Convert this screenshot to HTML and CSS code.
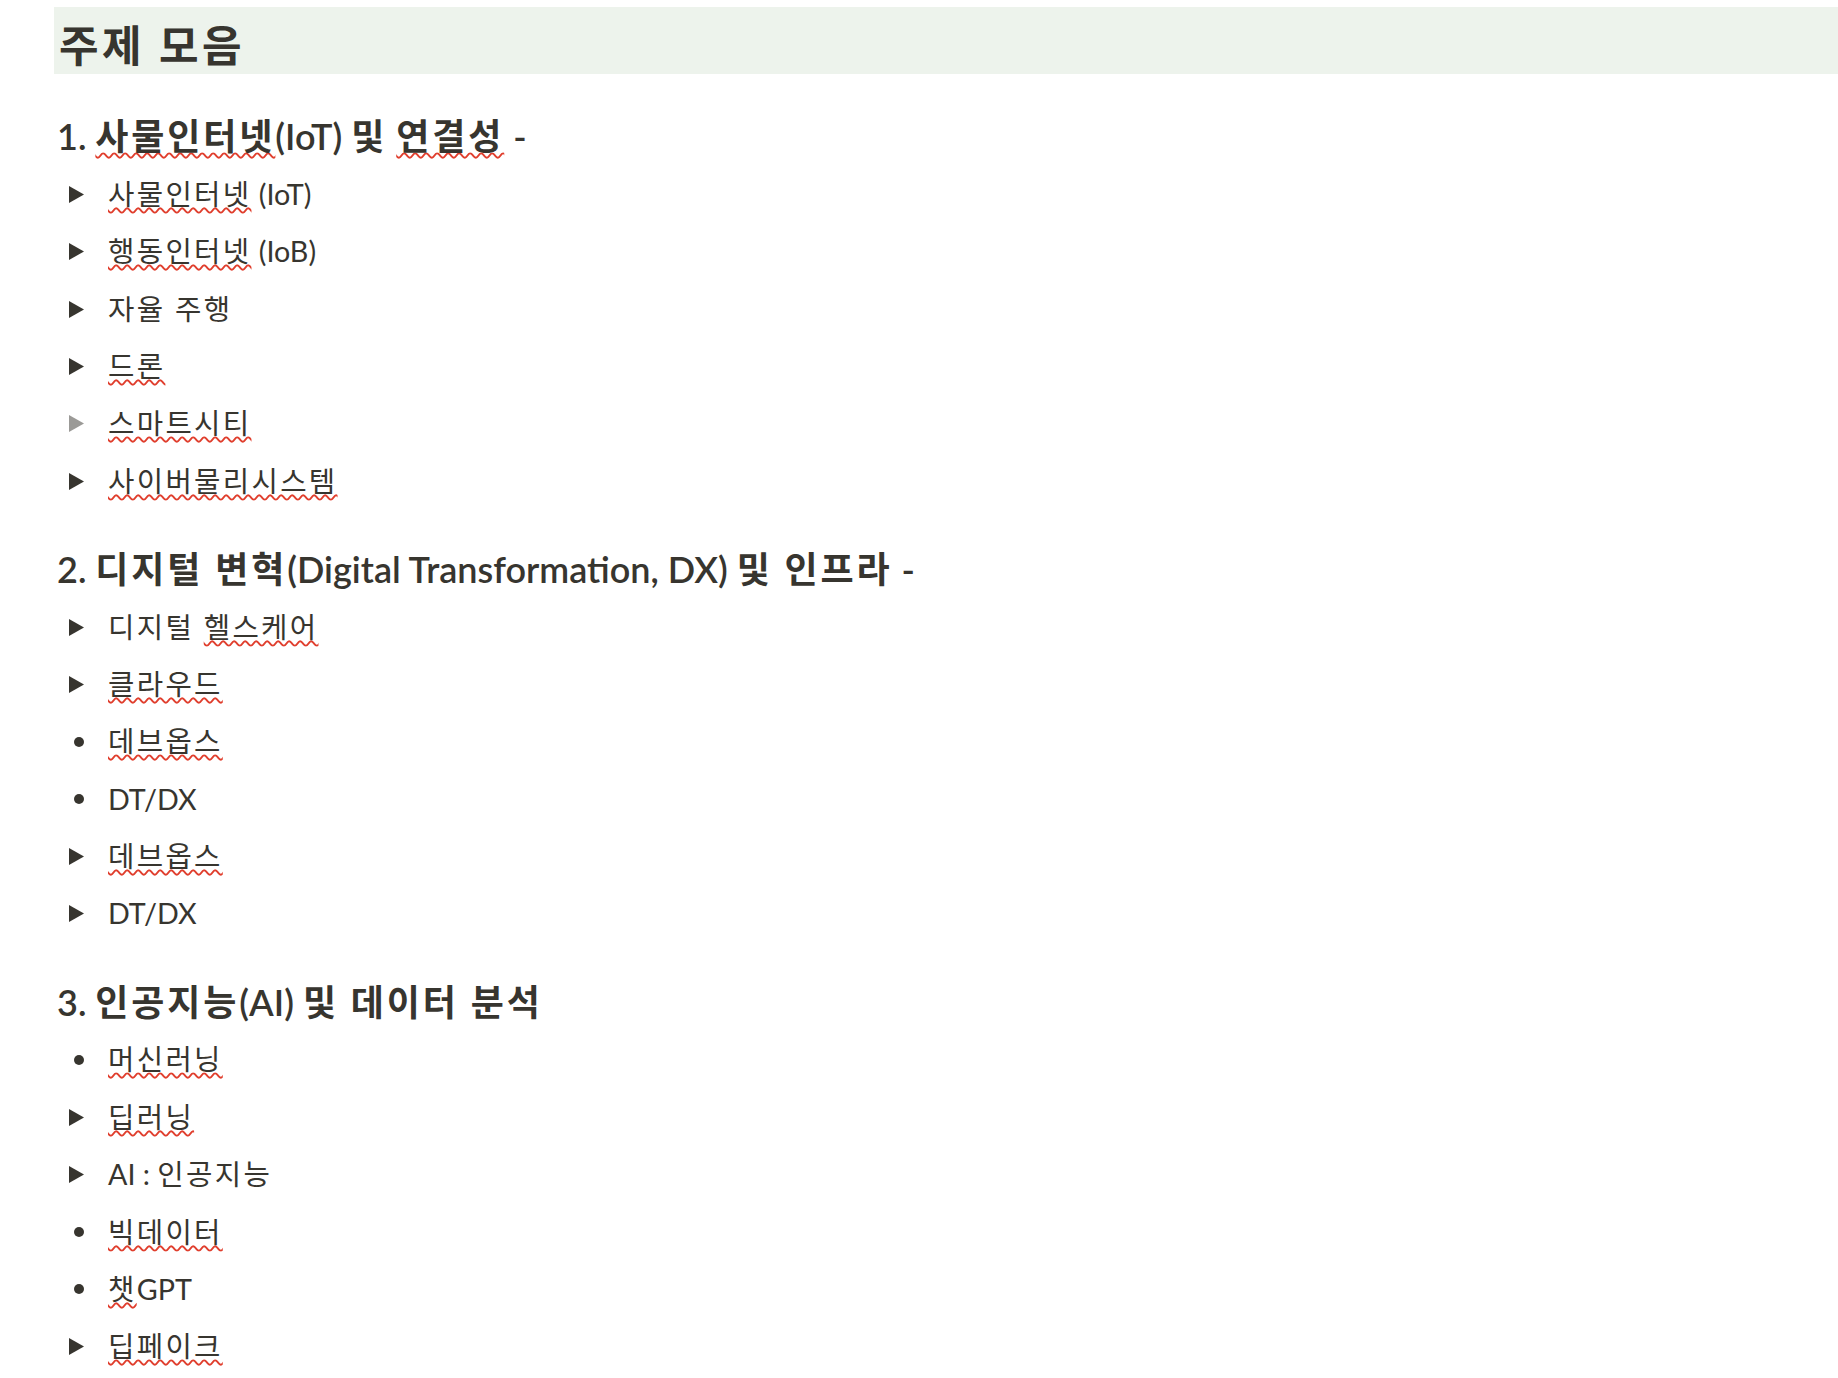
FILE: index.html
```html
<!DOCTYPE html>
<html lang="ko">
<head>
  <meta charset="UTF-8" />
  <meta name="viewport" content="width=device-width, initial-scale=1.0" />
  <title>주제 모음</title>
  <link rel="stylesheet" href="styles.css">
</head>
<body>
  <div class="page">
    <h2 class="title"><span class="k">주제 모음</span></h2>

    <div class="section">
      <h3>1. <span class="typo">사물인터넷</span>(IoT) <span class="k">및</span> <span class="typo">연결성</span> -</h3>
      <div class="item"><span class="marker"><svg class="tri" viewBox="0 0 15 17"><polygon points="0,0 15,8.5 0,17"/></svg></span><span class="txt"><span class="typo">사물인터넷</span> (IoT)</span></div>
      <div class="item"><span class="marker"><svg class="tri" viewBox="0 0 15 17"><polygon points="0,0 15,8.5 0,17"/></svg></span><span class="txt"><span class="typo">행동인터넷</span> (IoB)</span></div>
      <div class="item"><span class="marker"><svg class="tri" viewBox="0 0 15 17"><polygon points="0,0 15,8.5 0,17"/></svg></span><span class="txt"><span class="k">자율 주행</span></span></div>
      <div class="item"><span class="marker"><svg class="tri" viewBox="0 0 15 17"><polygon points="0,0 15,8.5 0,17"/></svg></span><span class="txt"><span class="typo">드론</span></span></div>
      <div class="item"><span class="marker"><svg class="tri empty" viewBox="0 0 15 17"><polygon points="0,0 15,8.5 0,17"/></svg></span><span class="txt"><span class="typo">스마트시티</span></span></div>
      <div class="item"><span class="marker"><svg class="tri" viewBox="0 0 15 17"><polygon points="0,0 15,8.5 0,17"/></svg></span><span class="txt"><span class="typo">사이버물리시스템</span></span></div>
    </div>

    <div class="section">
      <h3>2. <span class="k">디지털 변혁</span>(Digital Transformation, DX) <span class="k">및 인프라</span> -</h3>
      <div class="item"><span class="marker"><svg class="tri" viewBox="0 0 15 17"><polygon points="0,0 15,8.5 0,17"/></svg></span><span class="txt"><span class="k">디지털 </span><span class="typo">헬스케어</span></span></div>
      <div class="item"><span class="marker"><svg class="tri" viewBox="0 0 15 17"><polygon points="0,0 15,8.5 0,17"/></svg></span><span class="txt"><span class="typo">클라우드</span></span></div>
      <div class="item"><span class="marker dot-wrap"><span class="dot"></span></span><span class="txt"><span class="typo">데브옵스</span></span></div>
      <div class="item"><span class="marker dot-wrap"><span class="dot"></span></span><span class="txt">DT/DX</span></div>
      <div class="item"><span class="marker"><svg class="tri" viewBox="0 0 15 17"><polygon points="0,0 15,8.5 0,17"/></svg></span><span class="txt"><span class="typo">데브옵스</span></span></div>
      <div class="item"><span class="marker"><svg class="tri" viewBox="0 0 15 17"><polygon points="0,0 15,8.5 0,17"/></svg></span><span class="txt">DT/DX</span></div>
    </div>

    <div class="section">
      <h3>3. <span class="k">인공지능</span>(AI) <span class="k">및 데이터 분석</span></h3>
      <div class="item"><span class="marker dot-wrap"><span class="dot"></span></span><span class="txt"><span class="typo">머신러닝</span></span></div>
      <div class="item"><span class="marker"><svg class="tri" viewBox="0 0 15 17"><polygon points="0,0 15,8.5 0,17"/></svg></span><span class="txt"><span class="typo">딥러닝</span></span></div>
      <div class="item"><span class="marker"><svg class="tri" viewBox="0 0 15 17"><polygon points="0,0 15,8.5 0,17"/></svg></span><span class="txt">AI : <span class="k">인공지능</span></span></div>
      <div class="item"><span class="marker dot-wrap"><span class="dot"></span></span><span class="txt"><span class="typo">빅데이터</span></span></div>
      <div class="item"><span class="marker dot-wrap"><span class="dot"></span></span><span class="txt"><span class="typo">챗</span>GPT</span></div>
      <div class="item"><span class="marker"><svg class="tri" viewBox="0 0 15 17"><polygon points="0,0 15,8.5 0,17"/></svg></span><span class="txt"><span class="typo">딥페이크</span></span></div>
    </div>
  </div>
</body>
</html>
```

FILE: styles.css
```css
body {
  margin: 0;
  font-family: "Lato", "Noto Sans CJK KR", sans-serif;
  color: #37352f;
  background: #ffffff;
  overflow: hidden;
}
.page {
  margin-left: 54px;
  padding-top: 7px;
}
.title {
  margin: 0;
  background: #edf3ec;
  font-size: 43px;
  font-weight: 700;
  line-height: 56px;
  padding: 11px 5px 0;
}
.section {
  margin-top: 31px;
}
.section:first-of-type {
  margin-top: 34px;
}
h3 {
  margin: 0;
  font-size: 36px;
  font-weight: 600;
  line-height: 46.8px;
  padding: 5.4px 3px;
}
.item {
  display: flex;
  align-items: center;
  font-size: 28.7px;
  font-weight: 400;
  line-height: 43px;
  padding: 7.2px 0;
}
.marker {
  width: 54px;
  flex-shrink: 0;
  display: flex;
  align-items: center;
  padding-left: 15px;
  box-sizing: border-box;
}
.tri {
  width: 15px;
  height: 17px;
  fill: #37352f;
}
.tri.empty {
  fill: #9b9a97;
}
.dot-wrap {
  padding-left: 20px;
}
.dot {
  width: 10px;
  height: 10px;
  border-radius: 50%;
  background: #37352f;
}
/* hangul is narrower in Noto than in the original font */
.k,
.typo {
  letter-spacing: 0.08em;
}
.typo {
  text-decoration: underline wavy #e03e2d;
  text-decoration-thickness: 1.8px;
  text-underline-offset: 2px;
  text-decoration-skip-ink: none;
}
```
